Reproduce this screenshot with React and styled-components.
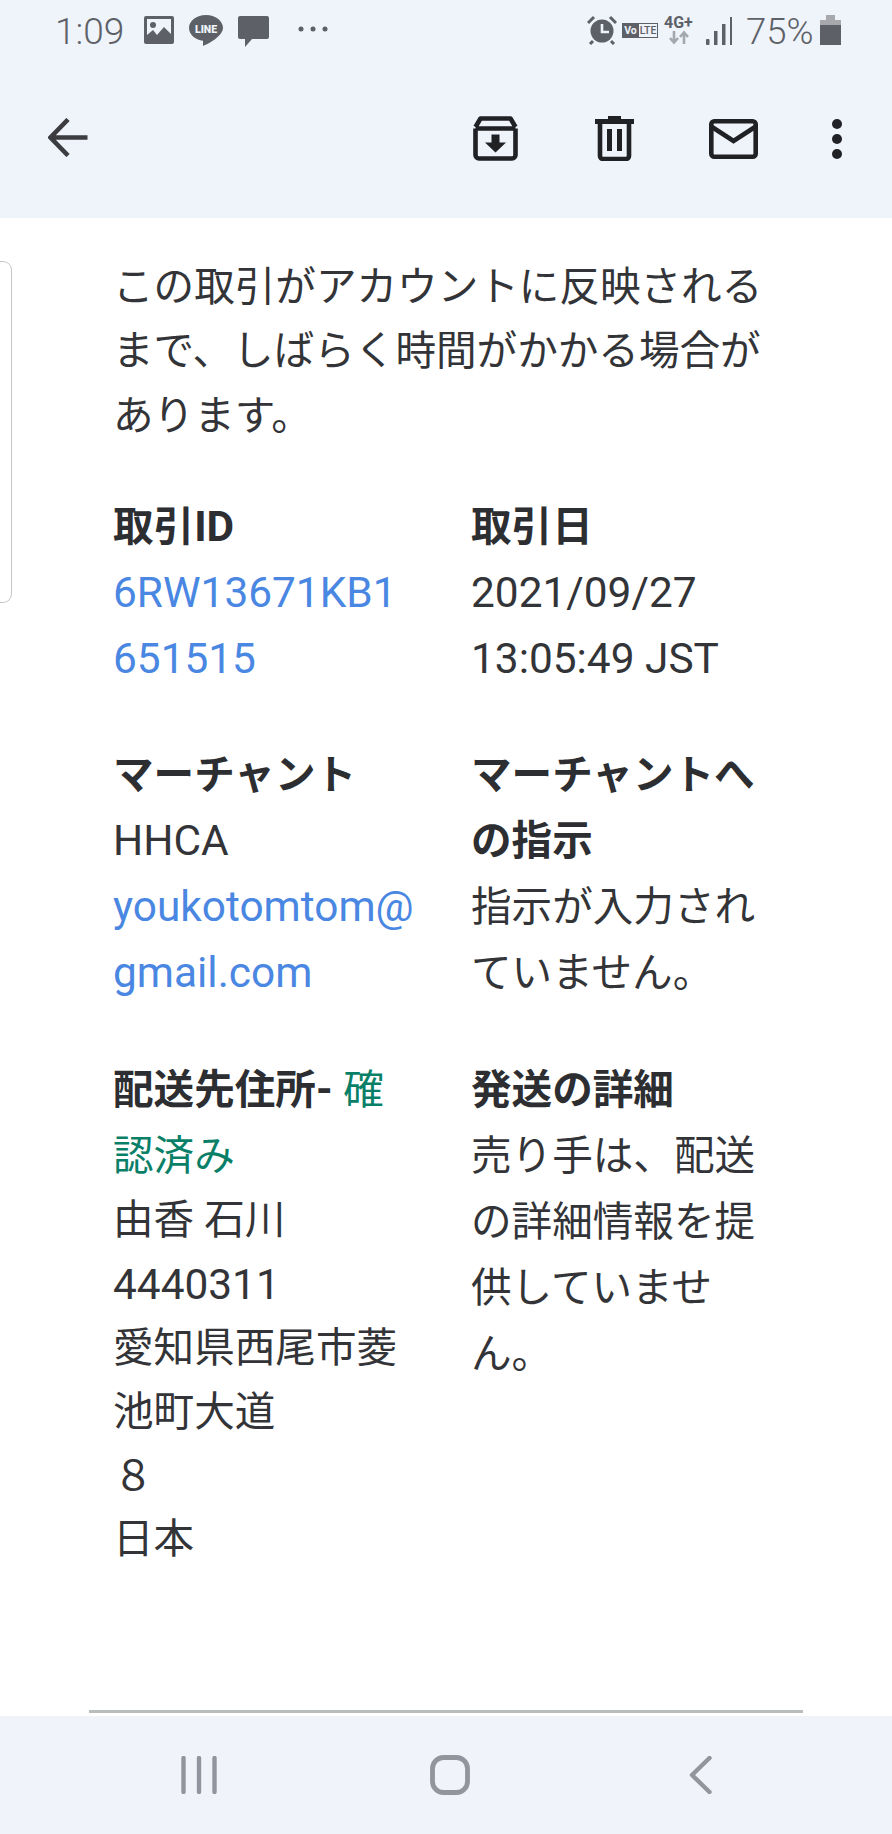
import React from "react";
import styled, { createGlobalStyle } from "styled-components";

const Global = createGlobalStyle`
  html, body { margin: 0; padding: 0; background: #fff; }
  #root { width: 892px; height: 1834px; }
`;

const Screen = styled.div`
  width: 892px;
  height: 1834px;
  display: flex;
  flex-direction: column;
  overflow: hidden;
  background: #fff;
  font-family: Roboto, "Noto Sans CJK JP", sans-serif;
  color: #333438;
`;

const Header = styled.header`
  height: 218px;
  flex: none;
  background: #eff3fa;
  display: flex;
  flex-direction: column;
`;

const StatusBar = styled.div`
  height: 62px;
  display: flex;
  align-items: flex-start;
  padding-top: 14px;
  box-sizing: border-box;
`;

const StatusText = styled.span`
  font-family: Roboto, sans-serif;
  font-size: ${(p) => p.$size}px;
  line-height: 35px;
  font-weight: 300;
  color: #5d6167;
  margin-left: ${(p) => p.$ml}px;
  width: ${(p) => p.$w}px;
  flex: none;
`;

const StatusIcon = styled.svg`
  flex: none;
  display: block;
  margin-left: ${(p) => p.$ml}px;
  margin-top: ${(p) => p.$mt || 0}px;
`;

const VolteBadge = styled.span`
  flex: none;
  display: flex;
  width: 36px;
  height: 15px;
  margin: 9px 0 0 5px;
  box-sizing: border-box;
  border: 1px solid #5d6167;
  font: 500 10.5px/13px Roboto, sans-serif;
  color: #5d6167;
`;

const VolteLead = styled.span`
  width: 17px;
  margin-left: -1px;
  flex: none;
  background: #5d6167;
  color: #eff3fa;
  font-weight: 700;
  text-align: center;
`;

const VolteTail = styled.span`
  flex: 1;
  text-align: center;
`;

const NetworkStack = styled.span`
  flex: none;
  width: 29px;
  margin: 1px 0 0 6px;
  display: flex;
  flex-direction: column;
  align-items: flex-start;
  font: 700 16px/15px Roboto, sans-serif;
  color: #5d6167;
`;

const ArrowSvg = styled.svg`
  display: block;
`;

const Toolbar = styled.div`
  flex: 1;
  display: flex;
  align-items: flex-start;
`;

const ToolIcon = styled.svg`
  flex: none;
  display: block;
  margin-left: ${(p) => p.$ml}px;
  margin-top: ${(p) => p.$mt}px;
`;

const Main = styled.main`
  flex: 1;
  display: flex;
  align-items: flex-start;
  min-height: 0;
`;

const SideCard = styled.div`
  width: 12px;
  height: 342px;
  margin-top: 43px;
  flex: none;
  box-sizing: border-box;
  border: 1.5px solid #c6c6c6;
  border-left: none;
  border-radius: 0 9px 9px 0;
`;

const Content = styled.div`
  flex: 1;
  padding: 37px 0 0 101px;
  font-size: 40.6px;
  line-height: 66px;
  display: flex;
  flex-direction: column;
`;

const Paragraph = styled.p`
  margin: 0 0 46px;
  white-space: nowrap;
  line-height: 64.3px;
`;

const Grid = styled.div`
  display: grid;
  grid-template-columns: 358px 300px;
  row-gap: 50.5px;
`;

const Cell = styled.div`
  white-space: nowrap;
`;

const Address = styled.div`
  line-height: 63.7px;
`;

const Label = styled.strong`
  font-weight: 700;
  color: #2d2e31;
`;

const Latin = styled.span`
  font-size: 42.4px;
`;

const Link = styled.span`
  color: ${(p) => (p.$green ? "#0a7f68" : "#4a87e2")};
`;

const Divider = styled.hr`
  flex: none;
  width: 714px;
  height: 3px;
  margin: 0 0 3px 89px;
  border: none;
  background: #b9bdbe;
`;

const NavBar = styled.nav`
  flex: none;
  height: 118px;
  background: #f1f3fb;
  display: flex;
  align-items: flex-start;
`;

const NavIcon = styled.svg`
  flex: none;
  display: block;
  margin-left: ${(p) => p.$ml}px;
  margin-top: ${(p) => p.$mt}px;
`;

const Gray = "#5d6167";
const Dark = "#1f2124";

export default function App() {
  return (
    <Screen>
      <Global />
      <Header>
        <StatusBar>
          <StatusText $ml={55} $w={69} $size={37}>1:09</StatusText>
          <StatusIcon $ml={20} $mt={2} width="30" height="28" viewBox="0 0 30 28">
            <rect width="30" height="28" rx="2" fill={Gray} />
            <rect x="3" y="3" width="24" height="22" fill="#eff3fa" />
            <circle cx="9" cy="9" r="3" fill={Gray} />
            <path d="M3 25v-6l6-5 4 5 7-8 7 7v7z" fill={Gray} />
          </StatusIcon>
          <StatusIcon $ml={15} $mt={1} width="34" height="31" viewBox="0 0 34 31">
            <path d="M17 0C7.600 0 0 5.800 0 13c0 6.500 6 11.700 14 12.800L14 31c5-2 15-7.500 18.500-13.500 1-1.500 1.500-3 1.500-4.500C34 5.800 26.400 0 17 0z" fill={Gray} />
            <text x="17" y="17.500" textAnchor="middle" fontFamily="Roboto, sans-serif" fontWeight="900" fontSize="10.500" fill="#eff3fa">LINE</text>
          </StatusIcon>
          <StatusIcon $ml={15} $mt={2} width="31" height="31" viewBox="0 0 31 31">
            <path d="M2 0h27a2 2 0 0 1 2 2v19a2 2 0 0 1-2 2H14l-7 8v-8H2a2 2 0 0 1-2-2V2a2 2 0 0 1 2-2z" fill={Gray} />
          </StatusIcon>
          <StatusIcon $ml={29} $mt={12} width="30" height="6" viewBox="0 0 30 6">
            <circle cx="3" cy="3" r="2.500" fill={Gray} />
            <circle cx="15" cy="3" r="2.500" fill={Gray} />
            <circle cx="27" cy="3" r="2.500" fill={Gray} />
          </StatusIcon>
          <StatusIcon $ml={259} $mt={1} width="30" height="30" viewBox="0 0 30 30">
            <circle cx="15" cy="16" r="11.500" fill={Gray} />
            <path d="M15 9v8h7" stroke="#eff3fa" strokeWidth="2.600" fill="none" />
            <path d="M1 8l6-6M29 8l-6-6M6 26l-3 3M24 26l3 3" stroke={Gray} strokeWidth="3" />
          </StatusIcon>
          <VolteBadge>
            <VolteLead>Vo</VolteLead>
            <VolteTail>LTE</VolteTail>
          </VolteBadge>
          <NetworkStack>
            4G+
            <ArrowSvg width="29" height="15" viewBox="0 0 29 15">
              <path d="M10 1v11M6 8l4 4.500 4-4.500" stroke="#a4a7ab" strokeWidth="2.600" fill="none" />
              <path d="M20 14V3M16 7l4-4.500 4 4.500" stroke="#a4a7ab" strokeWidth="2.600" fill="none" />
            </ArrowSvg>
          </NetworkStack>
          <StatusIcon $ml={13} $mt={3} width="26" height="28" viewBox="0 0 26 28">
            <rect x="0" y="22" width="3.500" height="6" rx="1" fill={Gray} />
            <rect x="8" y="14" width="3.500" height="14" fill={Gray} />
            <rect x="16" y="7" width="3.500" height="21" fill={Gray} />
            <rect x="24" y="0" width="2" height="28" fill={Gray} />
          </StatusIcon>
          <StatusText $ml={14} $w={66} $size={36.5}>75%</StatusText>
          <StatusIcon $ml={8} $mt={1} width="21" height="30" viewBox="0 0 21 30">
            <path d="M6 0h9v5h6v7H0V5h6z" fill="#a6a8ac" />
            <rect y="10" width="21" height="20" fill={Gray} />
          </StatusIcon>
        </StatusBar>
        <Toolbar>
          <ToolIcon $ml={48} $mt={56} width="40" height="39" viewBox="0 0 40 39">
            <path d="M39.500 19.500H3M20 1.500L2.500 19.500 20 37.500" stroke="#3b3d40" strokeWidth="4.600" fill="none" />
          </ToolIcon>
          <ToolIcon $ml={385} $mt={54} width="45" height="45" viewBox="0 0 45 45">
            <path d="M2.500 12.500v26.500a3.500 3.500 0 0 0 3.500 3.500h33a3.500 3.500 0 0 0 3.500-3.500V12.500M2.500 11l5-8.500h30l5 8.500M2.500 12.500h40" stroke={Dark} strokeWidth="4.600" fill="none" strokeLinejoin="round" />
            <path d="M18.500 18.500h8v8h6.500L22.500 36.500 12 26.500h6.500z" fill={Dark} />
          </ToolIcon>
          <ToolIcon $ml={77} $mt={54} width="39" height="45" viewBox="0 0 39 45">
            <path d="M13 0h13v3h13v5H0V3h13z" fill={Dark} />
            <path d="M5 6v34a3 3 0 0 0 3 3h23a3 3 0 0 0 3-3V6" stroke={Dark} strokeWidth="4.600" fill="none" />
            <rect x="12" y="13" width="5" height="22" fill={Dark} />
            <rect x="22" y="13" width="5" height="22" fill={Dark} />
          </ToolIcon>
          <ToolIcon $ml={75} $mt={57} width="49" height="40" viewBox="0 0 49 40">
            <rect x="2.300" y="2.300" width="44.400" height="35.400" rx="3" stroke={Dark} strokeWidth="4.600" fill="none" />
            <path d="M3 8l21.500 14L46 8" stroke={Dark} strokeWidth="4.600" fill="none" />
          </ToolIcon>
          <ToolIcon $ml={74} $mt={57} width="10" height="40" viewBox="0 0 10 40">
            <circle cx="5" cy="5" r="5" fill={Dark} />
            <circle cx="5" cy="20" r="5" fill={Dark} />
            <circle cx="5" cy="35" r="5" fill={Dark} />
          </ToolIcon>
        </Toolbar>
      </Header>
      <Main>
        <SideCard />
        <Content>
          <Paragraph>
            この取引がアカウントに反映される
            <br />
            まで、しばらく時間がかかる場合が
            <br />
            あります。
          </Paragraph>
          <Grid>
            <Cell>
              <Label>取引<Latin>ID</Latin></Label>
              <br />
              <Link><Latin>6RW13671KB1</Latin></Link>
              <br />
              <Link><Latin>651515</Latin></Link>
            </Cell>
            <Cell>
              <Label>取引日</Label>
              <br />
              <Latin>2021/09/27</Latin>
              <br />
              <Latin>13:05:49 JST</Latin>
            </Cell>
            <Cell>
              <Label>マーチャント</Label>
              <br />
              <Latin>HHCA</Latin>
              <br />
              <Link><Latin>youkotomtom@</Latin></Link>
              <br />
              <Link><Latin>gmail.com</Latin></Link>
            </Cell>
            <Cell>
              <Label>マーチャントへ</Label>
              <br />
              <Label>の指示</Label>
              <br />
              指示が入力され
              <br />
              ていません。
            </Cell>
            <Cell>
              <Label>配送先住所<Latin>- </Latin></Label>
              <Link $green>確</Link>
              <br />
              <Link $green>認済み</Link>
              <Address>
                由香 石川
                <br />
                <Latin>4440311</Latin>
                <br />
                愛知県西尾市菱
                <br />
                池町大道
                <br />
                ８
                <br />
                日本
              </Address>
            </Cell>
            <Cell>
              <Label>発送の詳細</Label>
              <br />
              売り手は、配送
              <br />
              の詳細情報を提
              <br />
              供していませ
              <br />
              ん。
            </Cell>
          </Grid>
        </Content>
      </Main>
      <Divider />
      <NavBar>
        <NavIcon $ml={181} $mt={40} width="36" height="38" viewBox="0 0 36 38">
          <path d="M2.500 2v34M18 2v34M33.500 2v34" stroke="#92959e" strokeWidth="4.400" strokeLinecap="round" fill="none" />
        </NavIcon>
        <NavIcon $ml={213} $mt={39} width="40" height="40" viewBox="0 0 40 40">
          <rect x="2.500" y="2.500" width="35" height="35" rx="11" stroke="#92959e" strokeWidth="4.800" fill="none" />
        </NavIcon>
        <NavIcon $ml={219} $mt={40} width="23" height="38" viewBox="0 0 23 38">
          <path d="M20.500 2L3 19l17.500 17" stroke="#92959e" strokeWidth="4.400" strokeLinecap="round" strokeLinejoin="round" fill="none" />
        </NavIcon>
      </NavBar>
    </Screen>
  );
}
